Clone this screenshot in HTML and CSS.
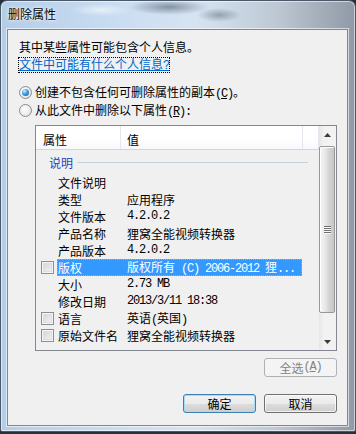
FILE: index.html
```html
<!DOCTYPE html>
<html lang="zh-CN">
<head>
<meta charset="utf-8">
<title>删除属性</title>
<link rel="stylesheet" href="styles.css">
</head>
<body>
<div class="window">
  <div class="titlebar"><span class="title">删除属性</span></div>
  <div class="client">
    <div class="intro">
      <div class="line">其中某些属性可能包含个人信息。</div>
      <div class="line"><span class="link">文件中可能有什么个人信息<span class="a">?</span></span></div>
    </div>
    <div class="options">
      <div class="opt"><span class="radio checked"></span><span>创建不包含任何可删除属性的副本<span class="a">(<u>C</u>)</span>。</span></div>
      <div class="opt"><span class="radio"></span><span>从此文件中删除以下属性<span class="a">(<u>R</u>):</span></span></div>
    </div>
    <div class="listbox">
      <div class="list-main">
        <div class="header">
          <div class="hcol c1">属性</div>
          <div class="hcol c2">值</div>
          <div class="hcol c3"></div>
        </div>
        <div class="group"><span class="gname">说明</span><i class="rule"></i></div>
        <div class="row"><span class="chk none"></span><div class="cell"><span class="name">文件说明</span><span class="val"></span></div></div>
        <div class="row"><span class="chk none"></span><div class="cell"><span class="name">类型</span><span class="val">应用程序</span></div></div>
        <div class="row"><span class="chk none"></span><div class="cell"><span class="name">文件版本</span><span class="val a">4.2.0.2</span></div></div>
        <div class="row"><span class="chk none"></span><div class="cell"><span class="name">产品名称</span><span class="val">狸窝全能视频转换器</span></div></div>
        <div class="row"><span class="chk none"></span><div class="cell"><span class="name">产品版本</span><span class="val a">4.2.0.2</span></div></div>
        <div class="row"><span class="chk"></span><div class="cell selected"><span class="name">版权</span><span class="val">版权所有<span class="a"> (C) 2006-2012 </span>狸<span class="a">...</span></span></div></div>
        <div class="row"><span class="chk none"></span><div class="cell"><span class="name">大小</span><span class="val a">2.73 MB</span></div></div>
        <div class="row"><span class="chk none"></span><div class="cell"><span class="name">修改日期</span><span class="val a">2013/3/11 18:38</span></div></div>
        <div class="row"><span class="chk"></span><div class="cell"><span class="name">语言</span><span class="val">英语<span class="a">(</span>英国<span class="a">)</span></span></div></div>
        <div class="row"><span class="chk"></span><div class="cell"><span class="name">原始文件名</span><span class="val">狸窝全能视频转换器</span></div></div>
      </div>
      <div class="scrollbar">
        <div class="sb-btn"><svg width="7" height="4" viewBox="0 0 7 4"><path d="M3.5 0L7 4H0Z" fill="#3c3c3c"/></svg></div>
        <div class="thumb">
          <svg width="7" height="8" viewBox="0 0 7 8">
            <rect x="0" y="0" width="7" height="1" fill="#6f6f6f"/>
            <rect x="0" y="2" width="7" height="1" fill="#6f6f6f"/>
            <rect x="0" y="4" width="7" height="1" fill="#6f6f6f"/>
            <rect x="0" y="6" width="7" height="1" fill="#6f6f6f"/>
            <rect x="0" y="1" width="7" height="1" fill="#fafafa"/>
            <rect x="0" y="3" width="7" height="1" fill="#fafafa"/>
            <rect x="0" y="5" width="7" height="1" fill="#fafafa"/>
            <rect x="0" y="7" width="7" height="1" fill="#fafafa"/>
          </svg>
        </div>
        <div class="track"></div>
        <div class="sb-btn"><svg width="7" height="4" viewBox="0 0 7 4"><path d="M0 0H7L3.5 4Z" fill="#3c3c3c"/></svg></div>
      </div>
    </div>
    <div class="selall-row"><button class="btn" disabled>全选<span class="a">(<u>A</u>)</span></button></div>
    <div class="footer">
      <button class="btn default">确定</button>
      <button class="btn">取消</button>
    </div>
  </div>
</div>
</body>
</html>
```
FILE: styles.css
```css
* { box-sizing: border-box; margin: 0; padding: 0; }
html, body { width: 356px; height: 434px; overflow: hidden; }
body {
  background: #27303a;
  font-family: "Noto Sans CJK SC", sans-serif;
  font-size: 12px;
  color: #000;
}
.a {
  font-family: "Liberation Mono", monospace;
  font-size: 12px;
  letter-spacing: -1.2px;
}
.window {
  width: 356px;
  height: 432px;
  border: 1px solid #4a5969;
  border-radius: 7px 7px 2px 2px;
  padding: 0 7px 5px 6px;
  display: flex;
  flex-direction: column;
  background:
    radial-gradient(40px 8px at 168px 6px, rgba(40,50,70,.45), rgba(40,50,70,0)),
    radial-gradient(22px 7px at 218px 14px, rgba(40,50,70,.35), rgba(40,50,70,0)),
    radial-gradient(30px 6px at 100px 9px, rgba(255,255,255,.55), rgba(255,255,255,0)),
    linear-gradient(to right, #b4cde7 0%, #c8dcf1 30%, #d6e4f2 55%, #bdc8d3 78%, #8f9aa6 100%);
  box-shadow: inset 0 0 0 1px rgba(255,255,255,.55);
}
.titlebar {
  height: 28px;
  display: flex;
  align-items: center;
  padding: 0 0 2px 1px;
}
.title {
  font-size: 12px;
  line-height: 14px;
  text-shadow: 0 0 4px #fff, 0 0 2px #fff;
}
.client {
  flex: 1;
  background: #f0f0f0;
  border: 1px solid #7b8896;
  box-shadow: 0 0 0 1px rgba(255,255,255,.6);
  display: flex;
  flex-direction: column;
}
.intro { margin: 8px 0 0 11px; }
.line { height: 17px; line-height: 17px; white-space: nowrap; }
.link {
  display: inline-block;
  color: #0066cc;
  text-decoration: underline;
  line-height: 12px;
  outline: 1px dotted #000;
  outline-offset: 0;
}
.options { margin: 11px 0 0 11px; }
.opt {
  height: 18px;
  display: flex;
  align-items: center;
  gap: 3px;
  white-space: nowrap;
}
.radio {
  width: 13px;
  height: 13px;
  border-radius: 50%;
  border: 1px solid #8a8c8e;
  background: radial-gradient(circle at 40% 40%, #ffffff 0%, #eeeeee 50%, #cfd2d6 100%);
  position: relative;
  flex: none;
}
.radio.checked::after {
  content: "";
  position: absolute;
  left: 2px;
  top: 2px;
  width: 7px;
  height: 7px;
  border-radius: 50%;
  background: radial-gradient(circle at 35% 30%, #c8f0ff 0%, #3f9de6 45%, #0c4f9e 100%);
}
.listbox {
  margin: 6px 10px 0 27px;
  height: 226px;
  border: 1px solid #828790;
  display: flex;
  background: #f0f0f0;
}
.list-main {
  flex: 1;
  display: flex;
  flex-direction: column;
}
.header {
  height: 24px;
  display: flex;
  border-bottom: 1px solid #d5d5d5;
  background: linear-gradient(#ffffff, #ffffff 55%, #f7f8fa);
}
.hcol {
  padding-top: 5px;
  line-height: 17px;
  border-right: 1px solid #e3e8ee;
}
.c1 { width: 85px; padding-left: 7px; }
.c2 { width: 182px; padding-left: 6px; }
.c3 { flex: 1; }
.group {
  height: 24px;
  display: flex;
  align-items: center;
  padding-left: 13px;
  color: #1f3fbf;
}
.rule {
  flex: 1;
  height: 1px;
  background: #c8d0da;
  margin: 0 11px 0 4px;
}
.row {
  height: 17px;
  display: flex;
  align-items: center;
  padding-left: 5px;
  white-space: nowrap;
}
.chk {
  width: 13px;
  height: 13px;
  margin-right: 3px;
  border: 1px solid #8e8f8f;
  background: linear-gradient(135deg, #cdd1d6, #f7f7f7);
  box-shadow: inset 0 0 0 1px #f4f4f4, inset 0 0 0 2px #dedede;
  flex: none;
}
.chk.none { visibility: hidden; }
.cell {
  width: 245px;
  height: 17px;
  display: flex;
  align-items: center;
  line-height: 17px;
}
.cell.selected {
  background: #3399ff;
  color: #fff;
  outline: 1px dotted #e8a23c;
  outline-offset: -1px;
}
.name { width: 70px; padding-left: 1px; }
.val { flex: 1; }
.scrollbar {
  width: 17px;
  display: flex;
  flex-direction: column;
  background: linear-gradient(to right, #e6e6e6, #f2f2f2 30%, #f2f2f2);
}
.sb-btn {
  height: 17px;
  display: flex;
  align-items: center;
  justify-content: center;
}
.sb-btn svg { display: block; }
.thumb {
  margin: 3px 1px 0 0;
  height: 167px;
  border: 1px solid #979797;
  border-radius: 2px;
  background: linear-gradient(to right, #f6f6f6, #e9e9e9 35%, #d7d7d7 60%, #c6c6c6);
  box-shadow: inset 1px 1px 0 #ffffff;
  display: flex;
  align-items: center;
  justify-content: center;
}
.track { flex: 1; }
.selall-row {
  display: flex;
  justify-content: flex-end;
  margin: 7px 10px 0 0;
}
.footer {
  display: flex;
  justify-content: flex-end;
  gap: 8px;
  margin: 17px 10px 0 0;
}
.btn {
  width: 73px;
  height: 19px;
  border: 1px solid #707070;
  border-radius: 3px;
  background: linear-gradient(#f2f2f2 0%, #ebebeb 50%, #dddddd 50%, #cfcfcf 100%);
  box-shadow: inset 0 0 0 1px rgba(255,255,255,.7);
  font-family: "Noto Sans CJK SC", sans-serif;
  font-size: 12px;
  line-height: 15px;
  color: #000;
  display: flex;
  align-items: center;
  justify-content: center;
}
.btn.default {
  border-color: #3c7fb1;
  box-shadow: inset 0 0 0 1px #a6dcf7;
}
.btn:disabled {
  border-color: #adb2b5;
  background: #f4f4f4;
  box-shadow: none;
  color: #838383;
}
```
